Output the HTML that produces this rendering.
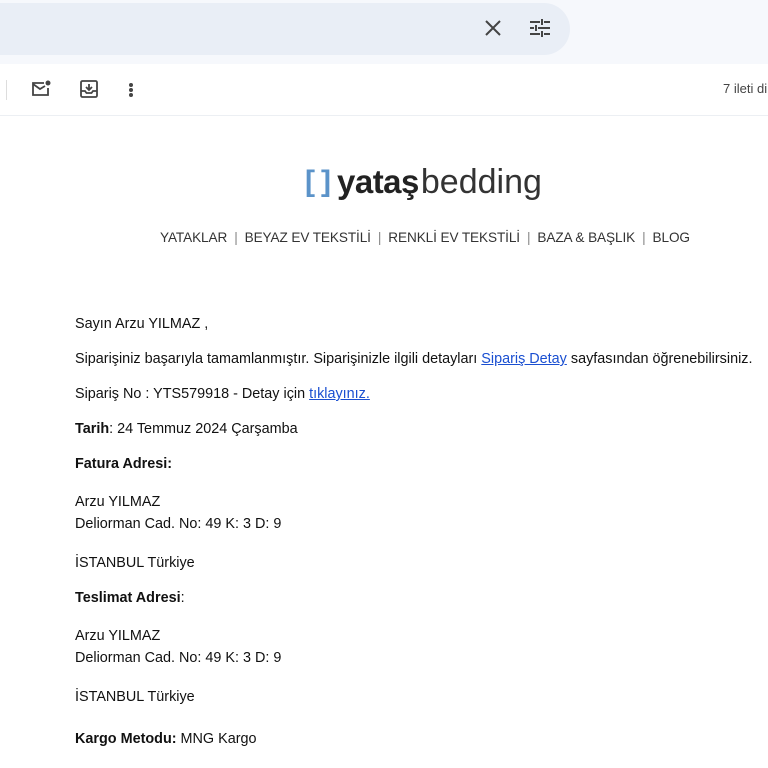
<!DOCTYPE html>
<html><head><meta charset="utf-8"><style>
body{margin:0;width:768px;height:768px;overflow:hidden;background:#fff;font-family:"Liberation Sans",Arial,sans-serif;position:relative}
.top{position:absolute;left:0;top:0;width:768px;height:64px;background:#f6f8fc}
.search{position:absolute;left:-30px;top:3px;width:600px;height:52px;background:#e9eef6;border-radius:26px}
.tool{position:absolute;top:64px;left:0;width:768px;height:51px;border-bottom:1px solid #eceff3}
.t{position:absolute;font-size:14.4px;color:#111;left:75px}
a{color:#1a4fd1;text-decoration:underline}
.nav{position:absolute;top:230px;left:160px;font-size:13.6px;color:#333;letter-spacing:-0.1px;white-space:nowrap}
.nav span{color:#888;margin:0 7px}
</style></head><body>
<div class="top"><div class="search"></div>
<svg style="position:absolute;left:484px;top:19px" width="18" height="18" viewBox="0 0 18 18"><path d="M2 2L16 16M16 2L2 16" stroke="#444" stroke-width="2"/></svg>
<svg style="position:absolute;left:530px;top:18px" width="20" height="20" viewBox="0 0 20 20" stroke="#444" stroke-width="2"><path d="M0 4h10M14 4h6M12 1v6M0 10h4M8 10h12M6 7v6M0 16h10M14 16h6M12 13v6"/></svg>
</div>
<div class="tool">
<div style="position:absolute;left:6px;top:16px;width:1px;height:20px;background:#ddd"></div>
<svg style="position:absolute;left:31px;top:16px" width="20" height="18" viewBox="0 0 20 18" fill="none" stroke="#444" stroke-width="1.8"><path d="M13 3H2v12h15V8"/><path d="M2 4l7 5 5-3"/><circle cx="17" cy="3" r="2.5" fill="#444" stroke="none"/></svg>
<svg style="position:absolute;left:80px;top:16px" width="18" height="18" viewBox="0 0 18 18" fill="none" stroke="#444" stroke-width="1.8"><rect x="1" y="1" width="16" height="16" rx="1.5"/><path d="M1 11h4l1.5 2h5l1.5-2h4M9 4v6M6 7l3 3 3-3"/></svg>
<div style="position:absolute;left:129px;top:19px;width:4px;height:4px;border-radius:2px;background:#444;box-shadow:0 5px 0 #444,0 10px 0 #444"></div>
<div style="position:absolute;left:723px;top:17px;font-size:13px;color:#444;white-space:nowrap">7 ileti di</div>
</div>
<div style="position:absolute;left:305px;top:164px;white-space:nowrap">
<span style="font-size:30px;font-weight:bold;color:#5b93c9;letter-spacing:6px;vertical-align:top;line-height:36px">[]</span><span style="font-size:33px;font-weight:bold;color:#222;line-height:36px;vertical-align:top;letter-spacing:-0.5px">yataş</span><span style="font-size:34px;color:#333;line-height:36px;vertical-align:top;margin-left:2px">bedding</span>
</div>
<div class="nav">YATAKLAR<span>|</span>BEYAZ EV TEKSTİLİ<span>|</span>RENKLİ EV TEKSTİLİ<span>|</span>BAZA &amp; BAŞLIK<span>|</span>BLOG</div>
<div class="t" style="top:316px">Sayın Arzu YILMAZ ,</div>
<div class="t" style="top:351px;white-space:nowrap">Siparişiniz başarıyla tamamlanmıştır. Siparişinizle ilgili detayları <a>Sipariş Detay</a> sayfasından öğrenebilirsiniz.</div>
<div class="t" style="top:386px">Sipariş No : YTS579918 - Detay için <a>tıklayınız.</a></div>
<div class="t" style="top:421px"><b>Tarih</b>: 24 Temmuz 2024 Çarşamba</div>
<div class="t" style="top:456px"><b>Fatura Adresi:</b></div>
<div class="t" style="top:491px;line-height:22px">Arzu YILMAZ<br>Deliorman Cad. No: 49 K: 3 D: 9</div>
<div class="t" style="top:555px">İSTANBUL Türkiye</div>
<div class="t" style="top:590px"><b>Teslimat Adresi</b>:</div>
<div class="t" style="top:625px;line-height:22px">Arzu YILMAZ<br>Deliorman Cad. No: 49 K: 3 D: 9</div>
<div class="t" style="top:689px">İSTANBUL Türkiye</div>
<div class="t" style="top:731px"><b>Kargo Metodu:</b> MNG Kargo</div>
</body></html>
